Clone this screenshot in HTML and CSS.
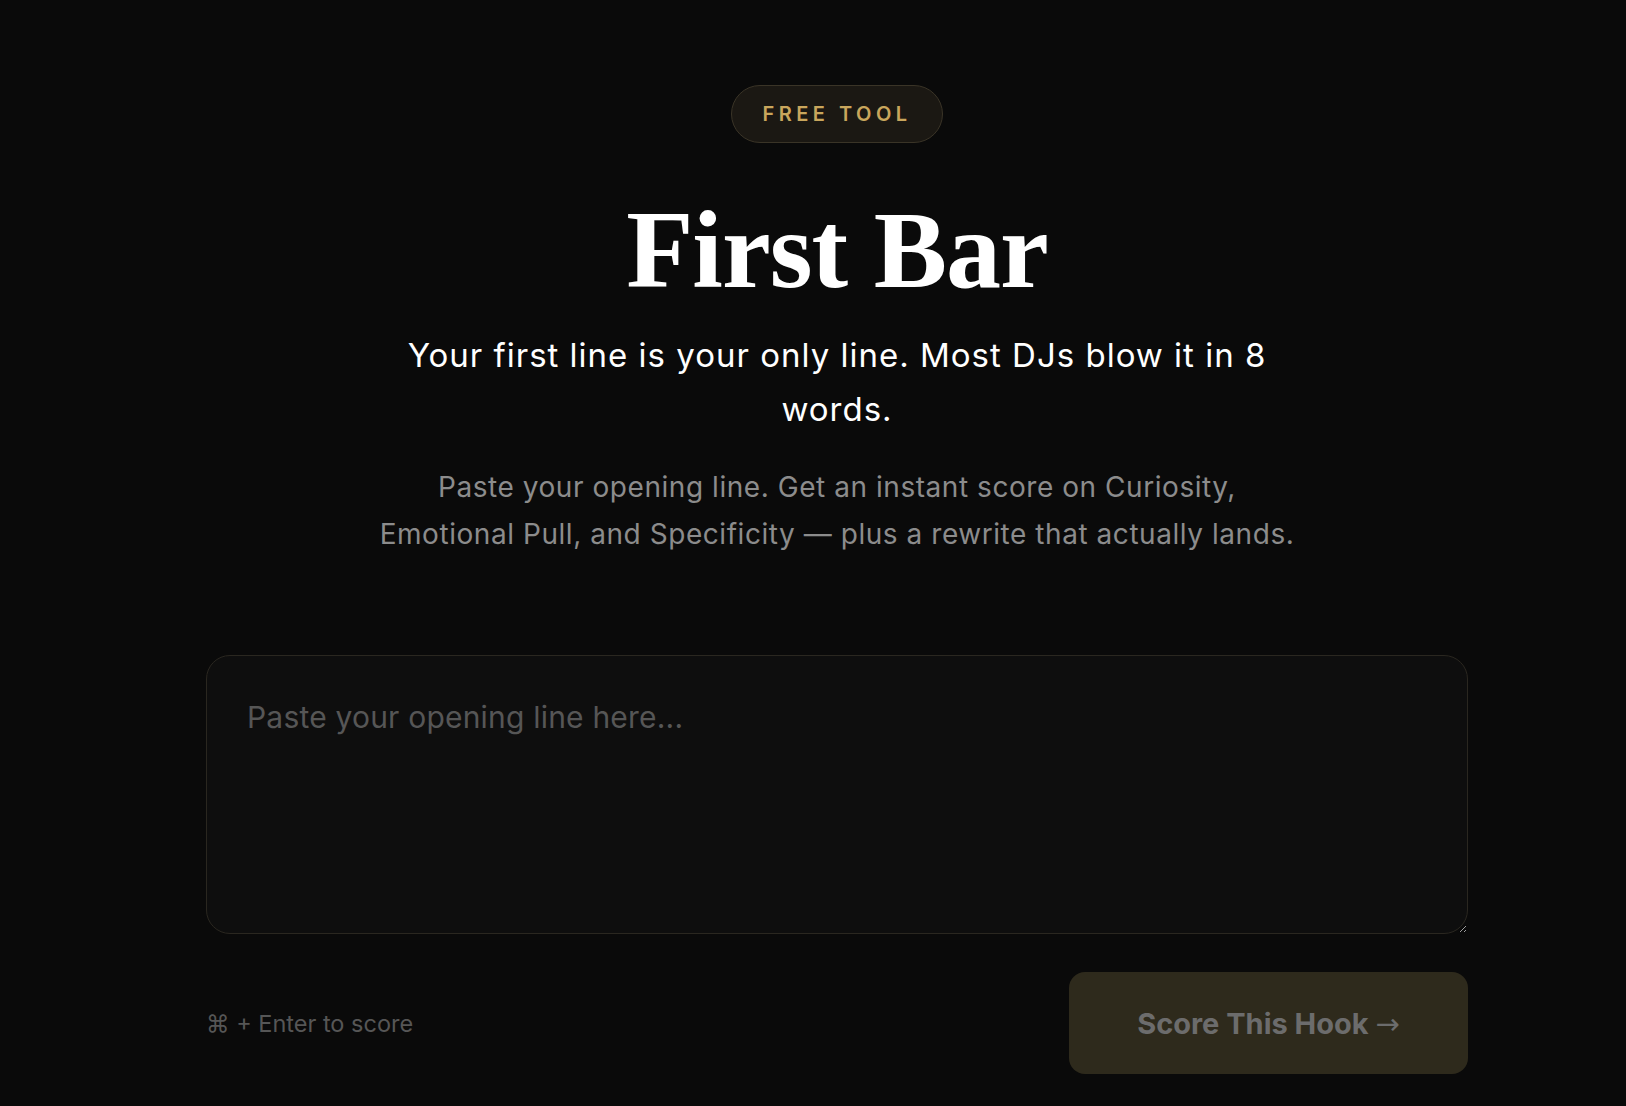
FILE: index.html
```html
<!DOCTYPE html>
<html lang="en">
<head>
    <meta charset="UTF-8">
    <meta name="viewport" content="width=device-width, initial-scale=1.0">
    <title>First Bar</title>
    <link rel="stylesheet" href="styles.css">
</head>
<body>

    <main class="page">

        <!-- Intro -->
        <section class="intro">
            <span class="badge">Free Tool</span>
            <h1 class="title">First Bar</h1>
            <p class="lead">Your first line is your only line. Most DJs blow it in 8 words.</p>
            <p class="desc">Paste your opening line. Get an instant score on Curiosity, Emotional Pull, and Specificity — plus a rewrite that actually lands.</p>
        </section>

        <!-- Hook form -->
        <form class="hook-form">
            <textarea class="hook-input" placeholder="Paste your opening line here..."></textarea>
            <div class="form-footer">
                <span class="hint">⌘ + Enter to score</span>
                <button type="submit" class="score-btn" disabled>Score This Hook <span class="arrow">→</span></button>
            </div>
        </form>

    </main>

</body>
</html>
```

FILE: styles.css
```css
/* General Styling */
body {
    margin: 0;
    padding: 0 0 0 48px;
    background: #0a0a0a;
    color: #fff;
    font-family: Inter, "Noto Sans", sans-serif;
}

.page {
    max-width: 1262px;
    margin: 0 auto;
    padding-top: 85px;
}

/* Intro */
.intro {
    display: flex;
    flex-direction: column;
    align-items: center;
    text-align: center;
}

.badge {
    display: inline-block;
    box-sizing: border-box;
    height: 58px;
    padding: 0 30px;
    line-height: 56px;
    border: 1px solid #3a3427;
    border-radius: 29px;
    background: #1b1813;
    color: #c9a65c;
    font-size: 20px;
    font-weight: 600;
    letter-spacing: 4.5px;
    text-transform: uppercase;
}

.title {
    margin: 52px 0 0;
    font-family: "Liberation Serif", serif;
    font-size: 110px;
    font-weight: 700;
    line-height: 1;
    letter-spacing: -1px;
}

.lead {
    max-width: 900px;
    margin: 23px 0 0;
    font-size: 33px;
    line-height: 54px;
    letter-spacing: 1px;
}

.desc {
    max-width: 920px;
    margin: 28px 0 0;
    color: #8c8c8c;
    font-size: 28px;
    line-height: 47px;
    letter-spacing: 0.55px;
}

/* Hook form */
.hook-form {
    margin-top: 97px;
}

.hook-input {
    display: block;
    box-sizing: border-box;
    width: 100%;
    height: 279px;
    padding: 37px 40px 40px;
    border: 1px solid #2a2720;
    border-radius: 24px;
    background: #0e0e0e;
    color: #fff;
    font-family: inherit;
    font-size: 30px;
    line-height: 48px;
    letter-spacing: 0.2px;
    resize: vertical;
    outline: none;
}

.hook-input::placeholder {
    color: #565656;
}

.form-footer {
    display: flex;
    justify-content: space-between;
    align-items: center;
    margin-top: 38px;
}

.hint {
    color: #565656;
    font-size: 23.5px;
}

.score-btn {
    width: 399px;
    height: 102px;
    border: none;
    border-radius: 16px;
    background: #2e2a1c;
    color: #6c6c6c;
    font-family: inherit;
    font-size: 29px;
    font-weight: 700;
    cursor: not-allowed;
}

.score-btn .arrow {
    font-family: "DejaVu Sans", sans-serif;
    font-weight: 400;
}
```
